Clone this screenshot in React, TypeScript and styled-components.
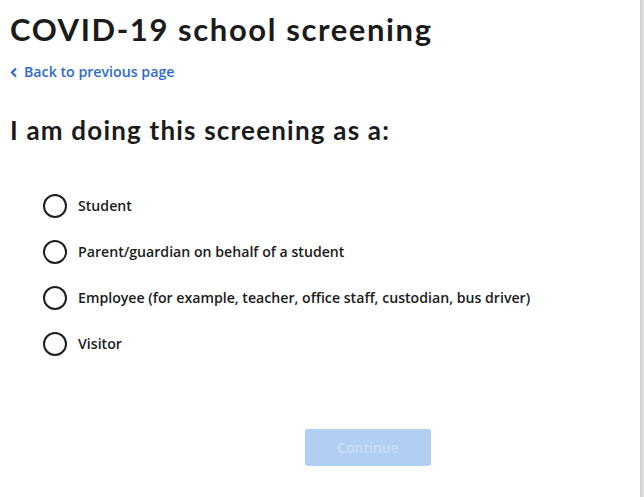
import React from "react"
import styled, { createGlobalStyle } from "styled-components"

const GlobalStyle = createGlobalStyle`
  html, body {
    margin: 0;
    padding: 0;
    background: #ffffff;
  }
`

const SPage = styled.div`
  display: flex;
  width: 644px;
  height: 497px;
  overflow: hidden;
`

const SMain = styled.main`
  flex: 1;
  padding: 0 0 0 10px;
  color: #1b1b1b;
  font-family: "Open Sans", "Liberation Sans", sans-serif;
`

const SEdge = styled.div`
  width: 4px;
  background: linear-gradient(to right, #cbcbcb, #e2e2e2);
`

const STitle = styled.h1`
  margin: 10px 0 0;
  font-family: Lato, "Liberation Sans", sans-serif;
  font-size: 31px;
  font-weight: 700;
  letter-spacing: 1.6px;
  line-height: 38px;
  color: #1b1b1b;
`

const SBackLink = styled.a`
  display: inline-flex;
  align-items: center;
  gap: 6px;
  margin-top: 14px;
  font-size: 14.2px;
  font-weight: 600;
  line-height: 20px;
  color: #2f6bca;
  text-decoration: none;
`

const SQuestion = styled.h2`
  margin: 31px 0 0;
  font-family: Lato, "Liberation Sans", sans-serif;
  font-size: 26px;
  font-weight: 700;
  letter-spacing: 1.2px;
  line-height: 32px;
  color: #1b1b1b;
`

const SOptionList = styled.div`
  display: flex;
  flex-direction: column;
  gap: 22px;
  margin: 48px 0 0 33px;
`

const SOption = styled.label`
  display: flex;
  align-items: center;
  gap: 11px;
  font-size: 14.15px;
  font-weight: 600;
  line-height: 24px;
  color: #1b1b1b;
  cursor: pointer;
`

const SRadio = styled.span`
  box-sizing: border-box;
  width: 24px;
  height: 24px;
  border: 2px solid #1e1e1e;
  border-radius: 50%;
  flex: none;
`

const SButton = styled.button`
  margin: 73px 0 0 295px;
  width: 126px;
  height: 37px;
  border: none;
  border-radius: 3px;
  background: #b1cff0;
  color: #cbdff6;
  font-family: "Open Sans", "Liberation Sans", sans-serif;
  font-size: 14px;
  font-weight: 600;
`

const options = [
  "Student",
  "Parent/guardian on behalf of a student",
  "Employee (for example, teacher, office staff, custodian, bus driver)",
  "Visitor",
]

export default function App() {
  return (
    <SPage>
      <GlobalStyle />
      <SMain>
        <STitle>COVID-19 school screening</STitle>
        <SBackLink href="#">
          <svg width="8" height="11" viewBox="0 0 8 11" fill="none">
            <path d="M6 1.5 L2 5.5 L6 9.5" stroke="#2f6bca" strokeWidth="2.2" />
          </svg>
          Back to previous page
        </SBackLink>
        <SQuestion>I am doing this screening as a:</SQuestion>
        <SOptionList>
          {options.map((o) => (
            <SOption key={o}>
              <SRadio />
              {o}
            </SOption>
          ))}
        </SOptionList>
        <SButton disabled>Continue</SButton>
      </SMain>
      <SEdge />
    </SPage>
  )
}
